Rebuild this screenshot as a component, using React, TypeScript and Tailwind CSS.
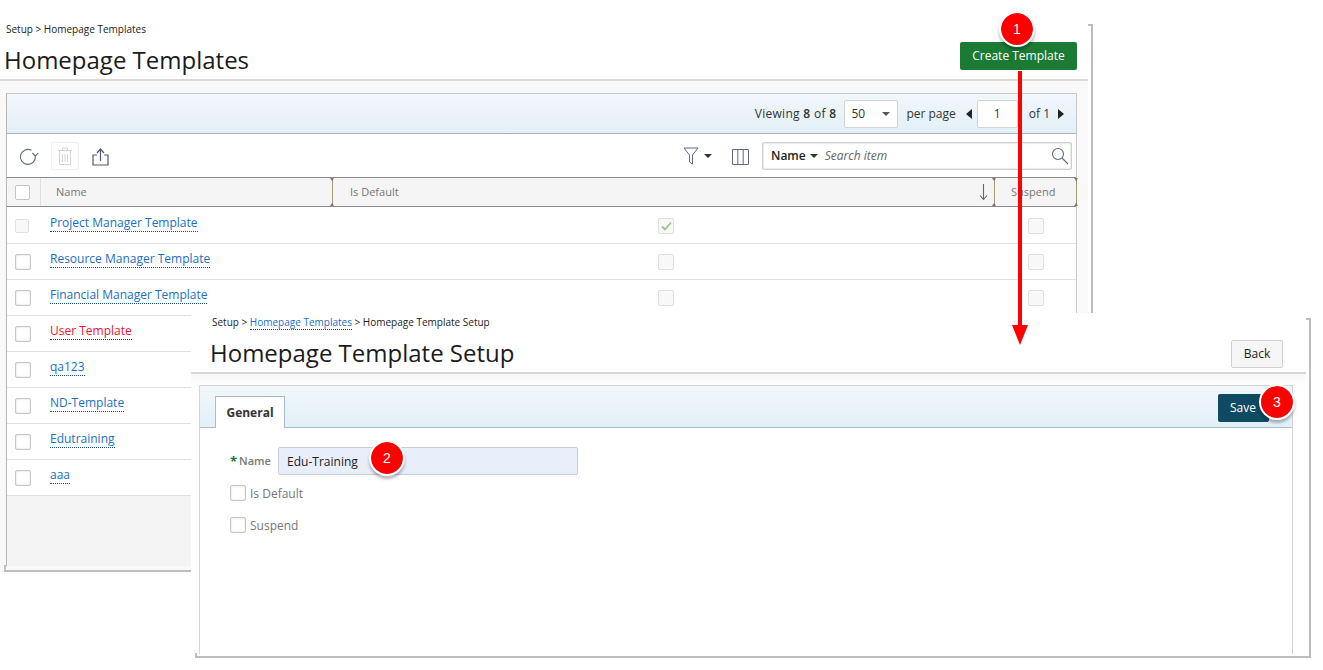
const rows = [
    { name: "Project Manager Template", disabled: true, isDefault: true },
    { name: "Resource Manager Template" },
    { name: "Financial Manager Template" },
    { name: "User Template", red: true },
    { name: "qa123" },
    { name: "ND-Template" },
    { name: "Edutraining" },
    { name: "aaa" },
]

function Check({ disabled, checked, small }: { disabled?: boolean; checked?: boolean; small?: boolean }) {
    if (disabled) {
        return <div className={(small ? "w-[14px] h-[14px]" : "w-4 h-4") + " border border-[#dfdfdf] rounded-[2px] bg-[#f8f8f8] grid place-content-center"}>
            {checked && <svg width="11" height="10" viewBox="0 0 11 10"><path d="M1 5.5 L4 8.5 L10 1.5" fill="none" stroke="#9cc38a" strokeWidth="1.8" /></svg>}
        </div>
    }
    return <div className="w-4 h-4 border border-[#c8c8c8] rounded-[2px] bg-white shadow-[inset_0_0_2px_#ccc]" />
}

function Badge({ n, className }: { n: number; className: string }) {
    return <div className={"absolute w-8 h-8 rounded-full bg-[#fe0000] text-white text-[14px] grid place-content-center outline-2 outline-white shadow-[0_3px_3px_2px_rgba(0,0,0,0.28)] font-['Liberation_Sans',sans-serif] " + className}>{n}</div>
}

function Corner({ className }: { className: string }) {
    return <div className={"absolute border-[#bdbdbd] " + className} />
}

function Resizer({ className }: { className: string }) {
    return <div className={"absolute top-0 bottom-0 w-px bg-[#a89a78] " + className}>
        <div className="absolute -left-[2px] top-0 w-0 h-0 border-x-[2.5px] border-x-transparent border-t-[3px] border-t-[#777]" />
        <div className="absolute -left-[2px] bottom-0 w-0 h-0 border-x-[2.5px] border-x-transparent border-b-[3px] border-b-[#777]" />
    </div>
}

function ListWindow() {
    return <div className="absolute left-0 top-0 w-[1093px] h-[572px] flex flex-col">
        <Corner className="right-0 top-[24px] w-[5px] h-[548px] border-r-2 border-t-2" />
        <Corner className="left-1 bottom-0 w-[1088px] h-[7px] border-l-2 border-b-2" />
        <div className="w-[1088px] h-[81px] border-b-2 border-[#d9d9d9] relative shrink-0">
            <div className="absolute left-[6px] top-[22px] text-[10px] leading-[14px] text-[#222]">Setup &gt; Homepage Templates</div>
            <div className="absolute left-1 top-[43px] text-[24px] leading-[34px] text-[#1b1b1b]">Homepage Templates</div>
            <button className="absolute left-[960px] top-[42px] w-[117px] h-7 bg-[#1b7a34] rounded-[2px] text-white text-[12px]">Create Template</button>
        </div>
        <div className="w-[1088px] grow bg-[#f9f9f9] pl-[6px] pr-[11px] pt-3 pb-[6px] flex">
            <div className="grow border border-[#c9c9c9] border-l-[#b8b8b8] border-b-0 flex flex-col bg-[#f4f4f4]">
                <div className="h-10 shrink-0 bg-gradient-to-b from-[#f1f7fb] to-[#e2f0f7] border-b border-[#a9b3b9] flex items-center justify-end text-[12px] text-[#333] pr-[12px]">
                    <span className="tracking-[0.3px]">Viewing <span className="font-semibold">8</span> of <span className="font-semibold">8</span></span>
                    <div className="ml-2 w-[54px] h-7 bg-white border border-[#d4d4d4] rounded-[2px] flex items-center justify-between pl-[6px] pr-[7px]">
                        <span>50</span>
                        <span className="w-0 h-0 border-x-[4px] border-x-transparent border-t-[4px] border-t-[#555]" />
                    </div>
                    <span className="ml-2">per page</span>
                    <span className="ml-[10px] w-0 h-0 border-y-[5px] border-y-transparent border-r-[6px] border-r-[#222]" />
                    <div className="ml-[5px] w-[41px] h-7 bg-white border border-[#d4d4d4] rounded-[2px] grid place-content-center">1</div>
                    <span className="ml-[11px]">of 1</span>
                    <span className="ml-2 w-0 h-0 border-y-[5px] border-y-transparent border-l-[6px] border-l-[#222]" />
                </div>
                <div className="h-[43px] shrink-0 bg-white flex items-center relative">
                    <svg className="absolute left-[12px] top-[14px]" width="20" height="19" viewBox="0 0 20 19" fill="none" stroke="#5f6b7d" strokeWidth="1.1">
                        <path d="M12.5 2.3 A7.5 7.5 0 1 0 16.4 8.2" />
                        <path d="M13.4 5 L16.4 8.2 L19.2 5" />
                    </svg>
                    <div className="absolute left-[44px] top-2 w-7 h-7 border border-[#eee] rounded-[2px] grid place-content-center">
                        <svg width="14" height="18" viewBox="0 0 14 18" fill="none" stroke="#d4d4d4" strokeWidth="1">
                            <path d="M0 3.5 H14 M4.5 3 V1 H9.5 V3 M1.5 4 V17.5 H12.5 V4 M4.5 7 V15 M7 7 V15 M9.5 7 V15" />
                        </svg>
                    </div>
                    <svg className="absolute left-[85px] top-[14px]" width="17" height="18" viewBox="0 0 17 18" fill="none" stroke="#4d5a6b" strokeWidth="1.2">
                        <path d="M5 7 H1 V17 H16 V7 H12 M8.5 13 V1.5 M5 5 L8.5 1 L12 5" />
                    </svg>
                    <svg className="absolute left-[676px] top-3" width="30" height="20" viewBox="0 0 30 20">
                        <path d="M1 2 H15 L9.5 9 V18 L6.5 16 V9 Z" fill="none" stroke="#5f6b7d" strokeWidth="1" />
                        <path d="M21 8 H29 L25 12 Z" fill="#333" />
                    </svg>
                    <svg className="absolute left-[725px] top-[15px]" width="17" height="16" viewBox="0 0 17 16" fill="none" stroke="#5f6b7d" strokeWidth="1">
                        <path d="M0.5 0.5 H16.5 V15.5 H0.5 Z M5.8 0.5 V15.5 M11.2 0.5 V15.5" />
                    </svg>
                    <div className="absolute left-[755px] top-2 w-[310px] h-7 bg-white border border-[#cfcfcf] shadow-[inset_0_0_2px_#bbb] rounded-[2px] flex items-center pl-2">
                        <span className="text-[12px] font-semibold text-[#222]">Name</span>
                        <span className="ml-1 w-0 h-0 border-x-[4px] border-x-transparent border-t-[4px] border-t-[#333]" />
                        <span className="ml-[7px] text-[12px] italic text-[#666]">Search item</span>
                        <svg className="absolute right-[2px] top-[4px]" width="18" height="18" viewBox="0 0 18 18" fill="none" stroke="#5f6b7d" strokeWidth="1.1">
                            <circle cx="7" cy="7" r="5.5" />
                            <path d="M11 11 L17 17" />
                        </svg>
                    </div>
                </div>
                <div className="h-[30px] shrink-0 bg-[#f5f5f5] border-y border-[#8a8a8a] relative text-[11px] text-[#777] flex items-center">
                    <div className="w-[34px] h-full border-r border-[#e0e0e0] flex items-center justify-center pl-0 pr-[2px]">
                        <div className="w-[15px] h-[15px] border border-[#c4c4c4] rounded-[2px] bg-white" />
                    </div>
                    <span className="ml-[15px]">Name</span>
                    <span className="absolute left-[343px]">Is Default</span>
                    <span className="absolute left-[1004px]">Suspend</span>
                    <svg className="absolute left-[972px] top-[6px]" width="9" height="17" viewBox="0 0 9 17" fill="none" stroke="#666" strokeWidth="1.1">
                        <path d="M4.5 0 V15 M1 11.5 L4.5 15.5 L8 11.5" />
                    </svg>
                    <Resizer className="left-[325px]" />
                    <Resizer className="left-[987px]" />
                    <Resizer className="left-[1069px]" />
                </div>
                {rows.map((r, i) => <div key={r.name} className={"shrink-0 bg-white border-[#e0e0e0] relative flex items-start " + (i == 0 ? "h-9" : "border-t ") + (i == rows.length - 1 ? "h-[37px] border-b" : i > 0 ? "h-9" : "")}>
                    <div className={"w-8 h-full flex items-center justify-center pt-px " + (r.disabled ? "pr-[2px]" : "")}><Check disabled={r.disabled} small={r.disabled} /></div>
                    <span className={"ml-[11px] text-[12px] leading-[17px] border-b border-dotted " + (i == 0 ? "mt-[7px] " : "mt-[6px] ") + (r.red ? "text-[#f0142d] border-[#b00020]" : "text-[#1a6fc4] border-[#0b4da2]")}>{r.name}</span>
                    <div className={"absolute left-[651px] " + (i == 0 ? "top-[11px]" : "top-[10px]")}><Check disabled checked={r.isDefault} /></div>
                    <div className={"absolute left-[1021px] " + (i == 0 ? "top-[11px]" : "top-[10px]")}><Check disabled /></div>
                </div>)}
            </div>
        </div>
    </div>
}

function SetupWindow() {
    return <div className="absolute left-[191px] top-[313px] w-[1120px] h-[345px] bg-white flex flex-col">
        <Corner className="right-0 top-[5px] w-[5px] h-[340px] border-r-2 border-t-2" />
        <Corner className="left-[4px] bottom-0 w-[1116px] h-[5px] border-l-2 border-b-2" />
        <div className="w-[1115px] h-[61px] border-b-2 border-[#d9d9d9] relative shrink-0">
            <div className="absolute left-[21px] top-[2px] text-[10px] leading-[14px] text-[#222]">Setup &gt; <span className="text-[#1a6fc4] border-b border-dotted border-[#0b4da2]">Homepage Templates</span> &gt; Homepage Template Setup</div>
            <div className="absolute left-[19px] top-[23px] text-[24px] leading-[34px] text-[#1b1b1b]">Homepage Template Setup</div>
            <button className="absolute left-[1040px] top-[27px] w-[52px] h-7 bg-[#f6f6f6] border border-[#d0d0d0] rounded-[2px] text-[12px] text-[#222]">Back</button>
        </div>
        <div className="w-[1115px] grow bg-gradient-to-b from-[#f8f8f8] to-white to-[5%] pl-2 pt-[11px] pb-[4px] flex">
            <div className="w-[1094px] border border-b-0 border-[#d4d4d4] flex flex-col">
                <div className="h-[42px] shrink-0 bg-gradient-to-b from-[#f1f7fb] to-[#e2f0f7] border-b border-[#a7bccd] relative">
                    <div className="absolute left-[15px] top-[10px] w-[70px] h-8 bg-white border border-b-0 border-[#a7bccd] grid place-content-center text-[12px] font-bold text-[#333]">General</div>
                    <button className="absolute left-[1018px] top-2 w-[51px] h-7 bg-[#0e4a62] rounded-[2px] text-white text-[12px] text-left pl-3">Save</button>
                </div>
                <div className="grow bg-white pl-[30px] pt-[19px] flex flex-col items-start text-[11px] text-[#777]">
                    <div className="flex items-center h-7">
                        <span className="text-[#1b7a34] font-bold text-[13px] leading-none mr-[2px]">*</span>
                        <span className="font-semibold w-[39px]">Name</span>
                        <div className="w-[300px] h-7 bg-[#e8effb] border border-[#c9ced6] rounded-[2px] flex items-center pl-2 pt-px text-[12px] text-[#222]">Edu-Training</div>
                    </div>
                    <label className="flex items-start gap-1 mt-[10px] leading-4"><Check /><span className="text-[12px] mt-px">Is Default</span></label>
                    <label className="flex items-start gap-1 mt-[15px] leading-4"><Check /><span className="text-[12px] mt-px">Suspend</span></label>
                </div>
            </div>
        </div>
    </div>
}

export default function App() {
    return <div className="relative w-[1323px] h-[670px] bg-white overflow-hidden font-['Open_Sans',sans-serif]">
        <ListWindow />
        <SetupWindow />
        <svg className="absolute left-[1011px] top-[71px]" width="18" height="275" viewBox="0 0 18 275">
            <path d="M7 0 H11 V254 H17 L9 274 L1 254 H7 Z" fill="#fe0000" />
        </svg>
        <Badge n={1} className="left-[1001px] top-[13px]" />
        <Badge n={2} className="left-[371px] top-[442px]" />
        <Badge n={3} className="left-[1261px] top-[386px]" />
    </div>
}
